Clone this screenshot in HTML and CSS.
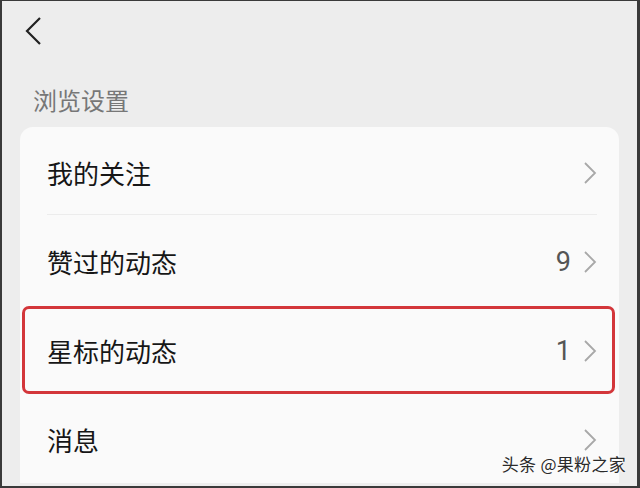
FILE: index.html
```html
<!DOCTYPE html>
<html lang="zh-CN">
<head>
<meta charset="UTF-8">
<meta name="viewport" content="width=device-width, initial-scale=1.0">
<title>浏览设置</title>
<link rel="stylesheet" href="styles.css">
</head>
<body>
<div class="screen">
    <div class="topbar">
        <svg class="back" width="18" height="30" viewBox="0 0 18 30">
            <polyline points="16,2 3,15 16,28" fill="none" stroke="#222" stroke-width="2.2" stroke-linejoin="miter"/>
        </svg>
    </div>

    <div class="section-title">浏览设置</div>

    <div class="card">
        <div class="row divided">
            <span class="label">我的关注</span>
            <span class="right">
                <svg class="arrow" width="14" height="24" viewBox="0 0 14 24"><polyline points="2,2 12,12 2,22" fill="none" stroke="#a8a8a8" stroke-width="1.8"/></svg>
            </span>
        </div>
        <div class="row">
            <span class="label">赞过的动态</span>
            <span class="right">
                <span class="count">9</span>
                <svg class="arrow" width="14" height="24" viewBox="0 0 14 24"><polyline points="2,2 12,12 2,22" fill="none" stroke="#a8a8a8" stroke-width="1.8"/></svg>
            </span>
        </div>
        <div class="row marked">
            <span class="label">星标的动态</span>
            <span class="right">
                <span class="count">1</span>
                <svg class="arrow" width="14" height="24" viewBox="0 0 14 24"><polyline points="2,2 12,12 2,22" fill="none" stroke="#a8a8a8" stroke-width="1.8"/></svg>
            </span>
        </div>
        <div class="row">
            <span class="label">消息</span>
            <span class="right">
                <svg class="arrow" width="14" height="24" viewBox="0 0 14 24"><polyline points="2,2 12,12 2,22" fill="none" stroke="#a8a8a8" stroke-width="1.8"/></svg>
            </span>
        </div>
    </div>

    <div class="watermark">头条 @果粉之家</div>
</div>
</body>
</html>
```

FILE: styles.css
```css
* {
    box-sizing: border-box;
}
html, body {
    margin: 0;
    padding: 0;
    background: #ededed;
}
body {
    font-family: "Noto Sans CJK SC", "Noto Sans", sans-serif;
    color: #1a1a1a;
}
.screen {
    position: relative;
    width: 640px;
    height: 488px;
    overflow: hidden;
    background: #ededed;
    border-top: 1px solid #3a3a3a;
    border-left: 2px solid #3a3a3a;
    border-right: 3px solid #3a3a3a;
    border-bottom: 2px solid #3a3a3a;
}
.topbar {
    height: 62px;
    padding: 15px 0 0 22px;
}
.back {
    display: block;
}
.section-title {
    height: 64px;
    padding-left: 31px;
    font-size: 24px;
    line-height: 74px;
    color: #777;
}
.card {
    margin-left: 18px;
    width: 599px;
    background: #fafafa;
    border-radius: 13px 13px 0 0;
}
.row {
    position: relative;
    height: 89px;
    display: flex;
    align-items: center;
    justify-content: space-between;
    padding: 2px 22px 0 27px;
}
.divided::before {
    content: "";
    position: absolute;
    left: 27px;
    right: 22px;
    bottom: 1px;
    height: 1px;
    background: #ececec;
}
.label {
    font-size: 26px;
    color: #161616;
}
.right {
    display: flex;
    align-items: center;
    gap: 12px;
}
.count {
    font-size: 27px;
    color: #555;
    font-family: "Roboto", "Noto Sans", sans-serif;
}
.arrow {
    display: block;
}
.marked::after {
    content: "";
    position: absolute;
    top: 1px;
    bottom: 0;
    left: 2px;
    right: 4px;
    border: 3px solid #d3363a;
    border-radius: 7px;
}
.watermark {
    position: absolute;
    right: 11px;
    bottom: 10px;
    font-size: 17px;
    letter-spacing: 0.3px;
    color: #2b2b2b;
    text-shadow: 0 0 2px #fff, 0 0 2px #fff;
}
```
